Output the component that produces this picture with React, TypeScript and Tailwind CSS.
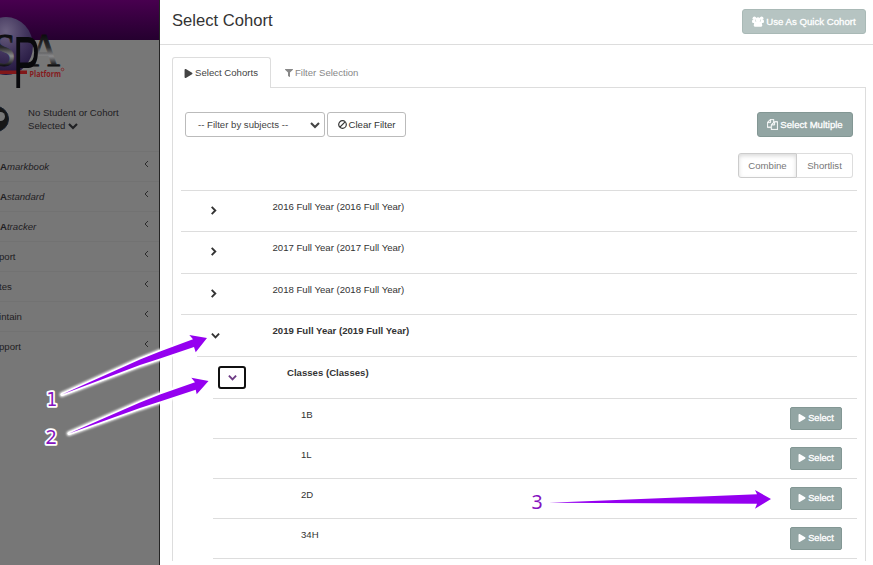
import React from "react";
import { FaPlay, FaFilter } from "react-icons/fa";

function Chevron({ size = 9, dir = "down" }: { size?: number; dir?: "down" | "right" }) {
  return (
    <svg width={size} height={size} viewBox="0 0 10 10" fill="none" stroke="currentColor" strokeWidth="2.1" className="shrink-0">
      <path d={dir === "down" ? "M1 3 L5 7 L9 3" : "M3 1 L7 5 L3 9"} />
    </svg>
  );
}

function CopyIcon() {
  return (
    <svg width="11" height="11" viewBox="0 0 1792 1792" fill="currentColor" stroke="currentColor" strokeWidth="50" className="shrink-0">
      <path d="M1696 384q40 0 68 28t28 68v1216q0 40-28 68t-68 28h-960q-40 0-68-28t-28-68v-288h-544q-40 0-68-28t-28-68v-672q0-40 20-88t48-76l408-408q28-28 76-48t88-20h416q40 0 68 28t28 68v328q68-40 128-40h416zm-544 213l-299 299h299v-299zm-640-384l-299 299h299v-299zm196 647l316-316v-416h-384v416q0 40-28 68t-68 28h-416v640h512v-256q0-40 20-88t48-76zm956 804v-1152h-384v416q0 40-28 68t-68 28h-416v640h896z" />
    </svg>
  );
}

function GroupIcon() {
  return (
    <svg width="12" height="11" viewBox="0 0 12 11" fill="currentColor" className="shrink-0">
      <circle cx="2.4" cy="2.2" r="1.8" />
      <circle cx="9.6" cy="2.2" r="1.8" />
      <circle cx="6" cy="3.8" r="2.5" />
      <path d="M0 5.4 Q0 3.6 1.2 3.6 H3 Q3 5.4 4 6 L3 7 H1.2 Q0 7 0 5.4Z M12 5.4 Q12 3.6 10.8 3.6 H9 Q9 5.4 8 6 L9 7 H10.8 Q12 7 12 5.4Z" />
      <path d="M1.8 9.2 Q1.8 5.8 4 5.8 H8 Q10.2 5.8 10.2 9.2 Q10.2 10.8 8.8 10.8 H3.2 Q1.8 10.8 1.8 9.2Z" />
    </svg>
  );
}

function BanIcon() {
  return (
    <svg width="9" height="9" viewBox="0 0 9 9" fill="none" stroke="currentColor" strokeWidth="1.2" className="shrink-0">
      <circle cx="4.5" cy="4.5" r="3.8" />
      <path d="M1.9 7.1 L7.1 1.9" />
    </svg>
  );
}

function Logo() {
  return (
    <svg width="70" height="76" viewBox="0 0 70 76" className="block">
      <defs>
        <radialGradient id="orb" cx="0.5" cy="0.25" r="0.75">
          <stop offset="0" stopColor="#6b6180" />
          <stop offset="0.5" stopColor="#41345c" />
          <stop offset="1" stopColor="#21143d" />
        </radialGradient>
        <linearGradient id="metal" gradientUnits="userSpaceOnUse" x1="0" y1="19" x2="0" y2="50">
          <stop offset="0" stopColor="#0c0c0e" />
          <stop offset="0.4" stopColor="#2a2a2c" />
          <stop offset="0.68" stopColor="#8a8a8c" />
          <stop offset="1" stopColor="#0c0c0e" />
        </linearGradient>
      </defs>
      <ellipse cx="6" cy="30" rx="27" ry="29" fill="url(#orb)" />
      <g fontFamily="Liberation Serif, serif">
        <text x="-7" y="50" fontSize="46" fill="url(#metal)" stroke="url(#metal)" strokeWidth="0.8" textLength="23" lengthAdjust="spacingAndGlyphs">S</text>
        <text x="29" y="50" fontSize="46" fill="url(#metal)" stroke="url(#metal)" strokeWidth="0.8" textLength="31" lengthAdjust="spacingAndGlyphs">A</text>
      </g>
      <rect x="0" y="54.5" width="27" height="3.5" fill="#811719" />
      <text x="13" y="72" fontSize="75" fontFamily="Liberation Sans, sans-serif" fill="#09090c" textLength="27" lengthAdjust="spacingAndGlyphs">P</text>
      <text x="29.5" y="60.5" fontSize="8.3" fontWeight="bold" fill="#851b20" fontFamily="Open Sans, sans-serif" textLength="31.5" lengthAdjust="spacingAndGlyphs">Platform</text>
      <circle cx="62.5" cy="53.5" r="1.3" fill="none" stroke="#851b20" strokeWidth="0.7" />
    </svg>
  );
}

const menu: { lead: string; name: string; italic: boolean }[] = [
  { lead: "A", name: "markbook", italic: true },
  { lead: "A", name: "standard", italic: true },
  { lead: "A", name: "tracker", italic: true },
  { lead: "", name: "port", italic: false },
  { lead: "", name: "tes", italic: false },
  { lead: "", name: "intain", italic: false },
  { lead: "", name: "pport", italic: false },
];

function Sidebar() {
  return (
    <aside className="flex h-full w-[160px] shrink-0 flex-col overflow-hidden border-r border-[#252525] bg-[#777] text-[#1f2023]">
      <div className="h-10 shrink-0 bg-linear-to-b from-[#48004f] to-[#25002f]" />
      <div className="-mt-[24px] h-[76px] shrink-0"><Logo /></div>
      <div className="flex h-[59px] shrink-0 items-start pt-[14px]">
        <div className="-ml-[17px] flex size-[26px] shrink-0 items-center justify-center rounded-full border border-[#142030] bg-[#171717]">
          <span className="-mt-[6px] ml-[8px] size-[9px] rounded-full bg-[#777]" />
        </div>
        <div className="ml-[19px] text-[9.6px] leading-[13px]">
          <div className="whitespace-nowrap">No Student or Cohort</div>
          <div className="flex items-center gap-[3px]">Selected <Chevron size={10} /></div>
        </div>
      </div>
      {menu.map((m) => (
        <div key={m.name} className="flex h-[30px] shrink-0 items-center justify-between border-t border-[#727272] pr-[10px] text-[9.6px]">
          <span className={m.italic ? "pt-px italic" : "-ml-px pt-px"}>
            {m.lead && <b className="not-italic">{m.lead}</b>}
            {m.name}
          </span>
          <svg width="5" height="8" viewBox="0 0 5 8" fill="none" stroke="#222" strokeWidth="0.9" className="mb-[5px]">
            <path d="M4 1 L1 4 L4 7" />
          </svg>
        </div>
      ))}
    </aside>
  );
}

const years = [
  { label: "2016 Full Year (2016 Full Year)", height: "h-[41px]" },
  { label: "2017 Full Year (2017 Full Year)", height: "h-[42px]" },
  { label: "2018 Full Year (2018 Full Year)", height: "h-[41px]" },
];
const classes = ["1B", "1L", "2D", "34H"];

function Tree() {
  return (
    <div className="mr-2 ml-2 text-[9.6px] leading-[12px] text-[#333]">
      {years.map((y) => (
        <div key={y.label} className={`flex border-t border-[#ddd] ${y.height}`}>
          <div className="w-[91.5px] pt-[15px] pl-[28px]"><Chevron dir="right" /></div>
          <div className="pt-[10px]">{y.label}</div>
        </div>
      ))}
      <div className="flex h-[42px] border-t border-[#ddd]">
        <div className="w-[91.5px] pt-[16px] pl-[30px]"><Chevron /></div>
        <div className="pt-[10px] font-bold">2019 Full Year (2019 Full Year)</div>
      </div>
      <div className="ml-4 flex h-[42px] border-t border-[#ddd]">
        <div className="w-[90px] pt-[9px] pl-[21px]">
          <div className="flex h-[23px] w-[28px] items-center justify-center rounded-[3px] border-2 border-[#101010] text-[#6d3b84]"><Chevron /></div>
        </div>
        <div className="pt-[10px] font-bold">Classes (Classes)</div>
      </div>
      <div className="ml-8 border-b border-[#ddd]">
        {classes.map((c) => (
          <div key={c} className="flex h-[40px] justify-between border-t border-[#ddd] pr-[15px] pl-[88px]">
            <span className="pt-[10px]">{c}</span>
            <button className="mt-2 flex h-[23px] w-[52px] items-center justify-center gap-[2px] rounded-[2px] border border-[#839794] bg-[#92a5a3] pb-px text-[9.2px] text-white [-webkit-text-stroke:0.3px_white]">
              <FaPlay size={8} /> Select
            </button>
          </div>
        ))}
      </div>
    </div>
  );
}

function Annotations() {
  const first = "62,394.5 140,359.5 160,351.5 193,339.3 189.3,335 207,338 195.7,352.3 194,347 160,358.5 140,365";
  const second = "69,433.5 140,402.5 160,394.5 195,382.3 191.3,377.7 208.5,381 196.7,394.3 195.7,389.7 160,401.5 140,408";
  const third = "549,502.7 757,494.3 755,490 771,499 755,508.7 757,503.8";
  return (
    <svg width="873" height="565" viewBox="0 0 873 565" className="pointer-events-none absolute inset-0" fontFamily="Noto Sans, sans-serif" fontSize="19.5">
      <defs>
        <filter id="halo" x="-10%" y="-20%" width="120%" height="140%"><feGaussianBlur stdDeviation="1" /></filter>
      </defs>
      <g fill="white" stroke="white" strokeWidth="5" strokeLinejoin="round" filter="url(#halo)">
        <polygon points={first} />
        <polygon points={second} />
      </g>
      <g fill="white" stroke="white" strokeWidth="3" strokeLinejoin="round">
        <polygon points={first} />
        <polygon points={second} />
      </g>
      <g fill="#9500f0">
        <polygon points={first} />
        <polygon points={second} />
        <polygon points={third} />
      </g>
      <g fill="#8513c0">
        <g stroke="white" strokeWidth="3.5" strokeLinejoin="round" paintOrder="stroke">
          <text x="46.5" y="406" fontFamily="DejaVu Sans Condensed, DejaVu Sans, sans-serif" fontSize="19" fontStretch="condensed">1</text>
          <text x="45.5" y="444">2</text>
        </g>
        <text x="531.5" y="509">3</text>
      </g>
    </svg>
  );
}

export default function App() {
  return (
    <div className="relative flex h-[565px] w-[873px] overflow-hidden bg-white font-['Liberation_Sans',Arial,sans-serif]">
      <Sidebar />
      <main className="flex min-w-0 flex-1 flex-col">
        <header className="flex h-[45px] shrink-0 items-start justify-between border-b border-[#ddd] pr-[7px] pl-3">
          <h1 className="pt-[11px] text-[16.6px] leading-[20px] text-[#333]">Select Cohort</h1>
          <button className="mt-[9px] flex h-[25px] w-[124px] items-center justify-center gap-[2px] rounded-[3px] border border-[#a9b9b6] bg-[#b6c4c2] text-[9.65px] text-white [-webkit-text-stroke:0.3px_white]">
            <GroupIcon /> <span className="pt-px">Use As Quick Cohort</span>
          </button>
        </header>
        <nav className="mt-3 flex h-[31px] shrink-0 pl-3 text-[9.6px]">
          <div className="flex w-[99px] items-center justify-center gap-[2px] rounded-t-[3px] border border-b-0 border-[#ddd] pr-px text-[#444]">
            <FaPlay size={9} /> Select Cohorts
          </div>
          <div className="mr-[7px] flex flex-1 items-center gap-[2px] border-b border-[#ddd] pt-[2px] pl-[14px] text-[#888]">
            <FaFilter size={8} /> Filter Selection
          </div>
        </nav>
        <section className="mr-[7px] ml-3 h-[473px] border-x border-[#ddd]">
          <div className="flex h-[49px] items-end justify-between pr-3 pl-3">
            <div className="flex gap-[2px] text-[9.6px]">
              <div className="flex h-[25px] w-[140px] items-center justify-between rounded-[3px] border border-[#bbb] pr-1 pl-[12px] text-[#444]">
                <span className="pt-px">-- Filter by subjects --</span> <Chevron size={10} />
              </div>
              <button className="flex h-[25px] w-[79px] items-center justify-center gap-[2px] rounded-[3px] border border-[#bbb] text-[#333]">
                <BanIcon /> <span className="pt-px">Clear Filter</span>
              </button>
            </div>
            <button className="flex h-[25px] w-[96px] items-center justify-center gap-[2px] rounded-[3px] border border-[#839794] bg-[#92a5a3] text-[9.6px] text-white [-webkit-text-stroke:0.3px_white]">
              <CopyIcon /> <span className="pt-px">Select Multiple</span>
            </button>
          </div>
          <div className="mt-4 mb-3 flex h-[25px] justify-end pr-3 text-[9.6px] text-[#777]">
            <button className="w-[59px] rounded-l-[3px] border border-[#ccc] pt-px shadow-[inset_0_2px_4px_rgba(0,0,0,0.15)]">Combine</button>
            <button className="w-[56px] rounded-r-[3px] border border-l-0 border-[#ddd] pt-px">Shortlist</button>
          </div>
          <Tree />
        </section>
      </main>
      <Annotations />
    </div>
  );
}
